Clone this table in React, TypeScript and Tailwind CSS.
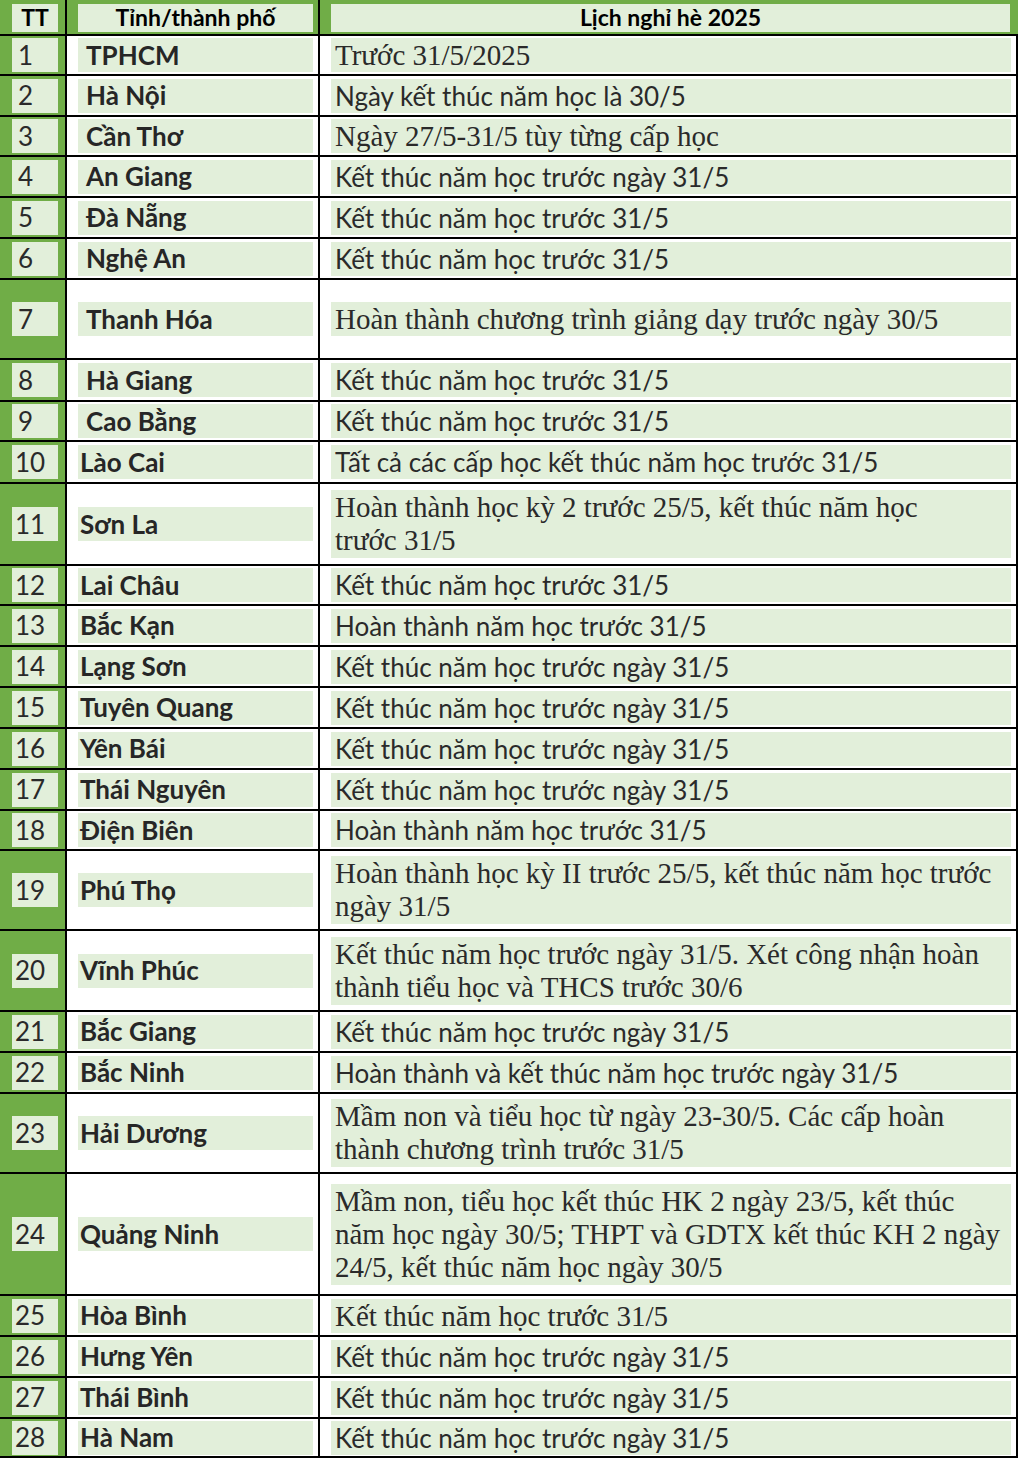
import React from 'react';

type Row = {
  n: number;
  name: string;
  lines: string[];
  serif?: boolean;
  h: number;
};

const rows: Row[] = [
  { n: 1, name: 'TPHCM', lines: ['Trước 31/5/2025'], serif: true, h: 40 },
  { n: 2, name: 'Hà Nội', lines: ['Ngày kết thúc năm học là 30/5'], h: 41 },
  { n: 3, name: 'Cần Thơ', lines: ['Ngày 27/5-31/5 tùy từng cấp học'], serif: true, h: 40 },
  { n: 4, name: 'An Giang', lines: ['Kết thúc năm học trước ngày 31/5'], h: 41 },
  { n: 5, name: 'Đà Nẵng', lines: ['Kết thúc năm học trước 31/5'], h: 41 },
  { n: 6, name: 'Nghệ An', lines: ['Kết thúc năm học trước 31/5'], h: 41 },
  { n: 7, name: 'Thanh Hóa', lines: ['Hoàn thành chương trình giảng dạy trước ngày 30/5'], serif: true, h: 80 },
  { n: 8, name: 'Hà Giang', lines: ['Kết thúc năm học trước 31/5'], h: 42 },
  { n: 9, name: 'Cao Bằng', lines: ['Kết thúc năm học trước 31/5'], h: 40 },
  { n: 10, name: 'Lào Cai', lines: ['Tất cả các cấp học kết thúc năm học trước 31/5'], h: 42 },
  {
    n: 11,
    name: 'Sơn La',
    lines: ['Hoàn thành học kỳ 2 trước 25/5, kết thúc năm học', 'trước 31/5'],
    serif: true,
    h: 82,
  },
  { n: 12, name: 'Lai Châu', lines: ['Kết thúc năm học trước 31/5'], h: 40 },
  { n: 13, name: 'Bắc Kạn', lines: ['Hoàn thành năm học trước 31/5'], h: 41 },
  { n: 14, name: 'Lạng Sơn', lines: ['Kết thúc năm học trước ngày 31/5'], h: 41 },
  { n: 15, name: 'Tuyên Quang', lines: ['Kết thúc năm học trước ngày 31/5'], h: 41 },
  { n: 16, name: 'Yên Bái', lines: ['Kết thúc năm học trước ngày 31/5'], h: 41 },
  { n: 17, name: 'Thái Nguyên', lines: ['Kết thúc năm học trước ngày 31/5'], h: 41 },
  { n: 18, name: 'Điện Biên', lines: ['Hoàn thành năm học trước 31/5'], h: 40 },
  {
    n: 19,
    name: 'Phú Thọ',
    lines: ['Hoàn thành học kỳ II trước 25/5, kết thúc năm học trước', 'ngày 31/5'],
    serif: true,
    h: 80,
  },
  {
    n: 20,
    name: 'Vĩnh Phúc',
    lines: ['Kết thúc năm học trước ngày 31/5. Xét công nhận hoàn', 'thành tiểu học và THCS trước 30/6'],
    serif: true,
    h: 81,
  },
  { n: 21, name: 'Bắc Giang', lines: ['Kết thúc năm học trước ngày 31/5'], h: 41 },
  { n: 22, name: 'Bắc Ninh', lines: ['Hoàn thành và kết thúc năm học trước ngày 31/5'], h: 41 },
  {
    n: 23,
    name: 'Hải Dương',
    lines: ['Mầm non và tiểu học từ ngày 23-30/5. Các cấp hoàn', 'thành chương trình trước 31/5'],
    serif: true,
    h: 80,
  },
  {
    n: 24,
    name: 'Quảng Ninh',
    lines: [
      'Mầm non, tiểu học kết thúc HK 2 ngày 23/5, kết thúc',
      'năm học ngày 30/5; THPT và GDTX kết thúc KH 2 ngày',
      '24/5, kết thúc năm học ngày 30/5',
    ],
    serif: true,
    h: 122,
  },
  { n: 25, name: 'Hòa Bình', lines: ['Kết thúc năm học trước 31/5'], serif: true, h: 41 },
  { n: 26, name: 'Hưng Yên', lines: ['Kết thúc năm học trước ngày 31/5'], h: 41 },
  { n: 27, name: 'Thái Bình', lines: ['Kết thúc năm học trước ngày 31/5'], h: 41 },
  { n: 28, name: 'Hà Nam', lines: ['Kết thúc năm học trước ngày 31/5'], h: 39 },
];

const sans = "font-['Lato','Noto_Sans',sans-serif]";
const serif = "font-['Liberation_Serif','DejaVu_Serif',serif]";

function TableRow({ row }: { row: Row }) {
  const multi = row.lines.length > 1;
  return (
    <div className="flex border-b-2 border-black" style={{ height: row.h }}>
      {/* TT */}
      <div className="flex w-[67px] shrink-0 items-center border-r-2 border-black bg-[#70AD47] pl-[12px] pr-[7px]">
        <div
          className={`flex h-[34px] w-full items-center bg-[#E2EFDA] text-[26px] text-[#2a2a2a] ${sans} ${
            row.n < 10 ? 'pl-[6px]' : 'pl-[3px]'
          }`}
        >
          {row.n}
        </div>
      </div>

      {/* Tỉnh/thành phố */}
      <div className="flex w-[253px] shrink-0 items-center border-r-2 border-black bg-white pl-[11px] pr-[5px]">
        <div
          className={`flex h-[34px] w-full items-center whitespace-nowrap bg-[#E2EFDA] text-[26px] font-bold text-[#262626] ${sans} ${
            row.n < 10 ? 'pl-[8px]' : 'pl-[2px]'
          }`}
        >
          {row.name}
        </div>
      </div>

      {/* Lịch nghỉ hè */}
      <div className="flex flex-1 items-center border-r-2 border-black bg-white pl-[11px] pr-[5px]">
        <div
          className={`w-full bg-[#E2EFDA] pl-[4px] text-[#2a2a2a] ${
            row.serif ? `${serif} text-[29px]` : `${sans} text-[26px]`
          } ${multi ? 'leading-[33px] py-[1px]' : 'leading-[34px]'}`}
        >
          {row.lines.map((l, i) => (
            <div key={i} className="whitespace-nowrap">
              {l}
            </div>
          ))}
        </div>
      </div>
    </div>
  );
}

export default function App() {
  return (
    <div className="min-h-[1463px] w-[1020px] bg-white">
      <div className="w-[1018px]">
        {/* header */}
        <div className={`flex h-[36px] border-b-2 border-black bg-[#70AD47] text-[23px] font-bold text-black ${sans}`}>
          <div className="flex w-[67px] shrink-0 items-center border-r-2 border-black pl-[12px] pr-[7px] pt-[1px]">
            <div className="flex h-[28px] w-full items-center justify-center bg-[#E2EFDA]">TT</div>
          </div>
          <div className="flex w-[253px] shrink-0 items-center border-r-2 border-black pl-[11px] pr-[5px] pt-[1px]">
            <div className="flex h-[28px] w-full items-center justify-center bg-[#E2EFDA]">Tỉnh/thành phố</div>
          </div>
          <div className="flex flex-1 items-center pl-[11px] pr-[8px] pt-[1px]">
            <div className="flex h-[28px] w-full items-center justify-center bg-[#E2EFDA]">Lịch nghỉ hè 2025</div>
          </div>
        </div>

        {rows.map((r) => (
          <TableRow key={r.n} row={r} />
        ))}
      </div>
    </div>
  );
}
